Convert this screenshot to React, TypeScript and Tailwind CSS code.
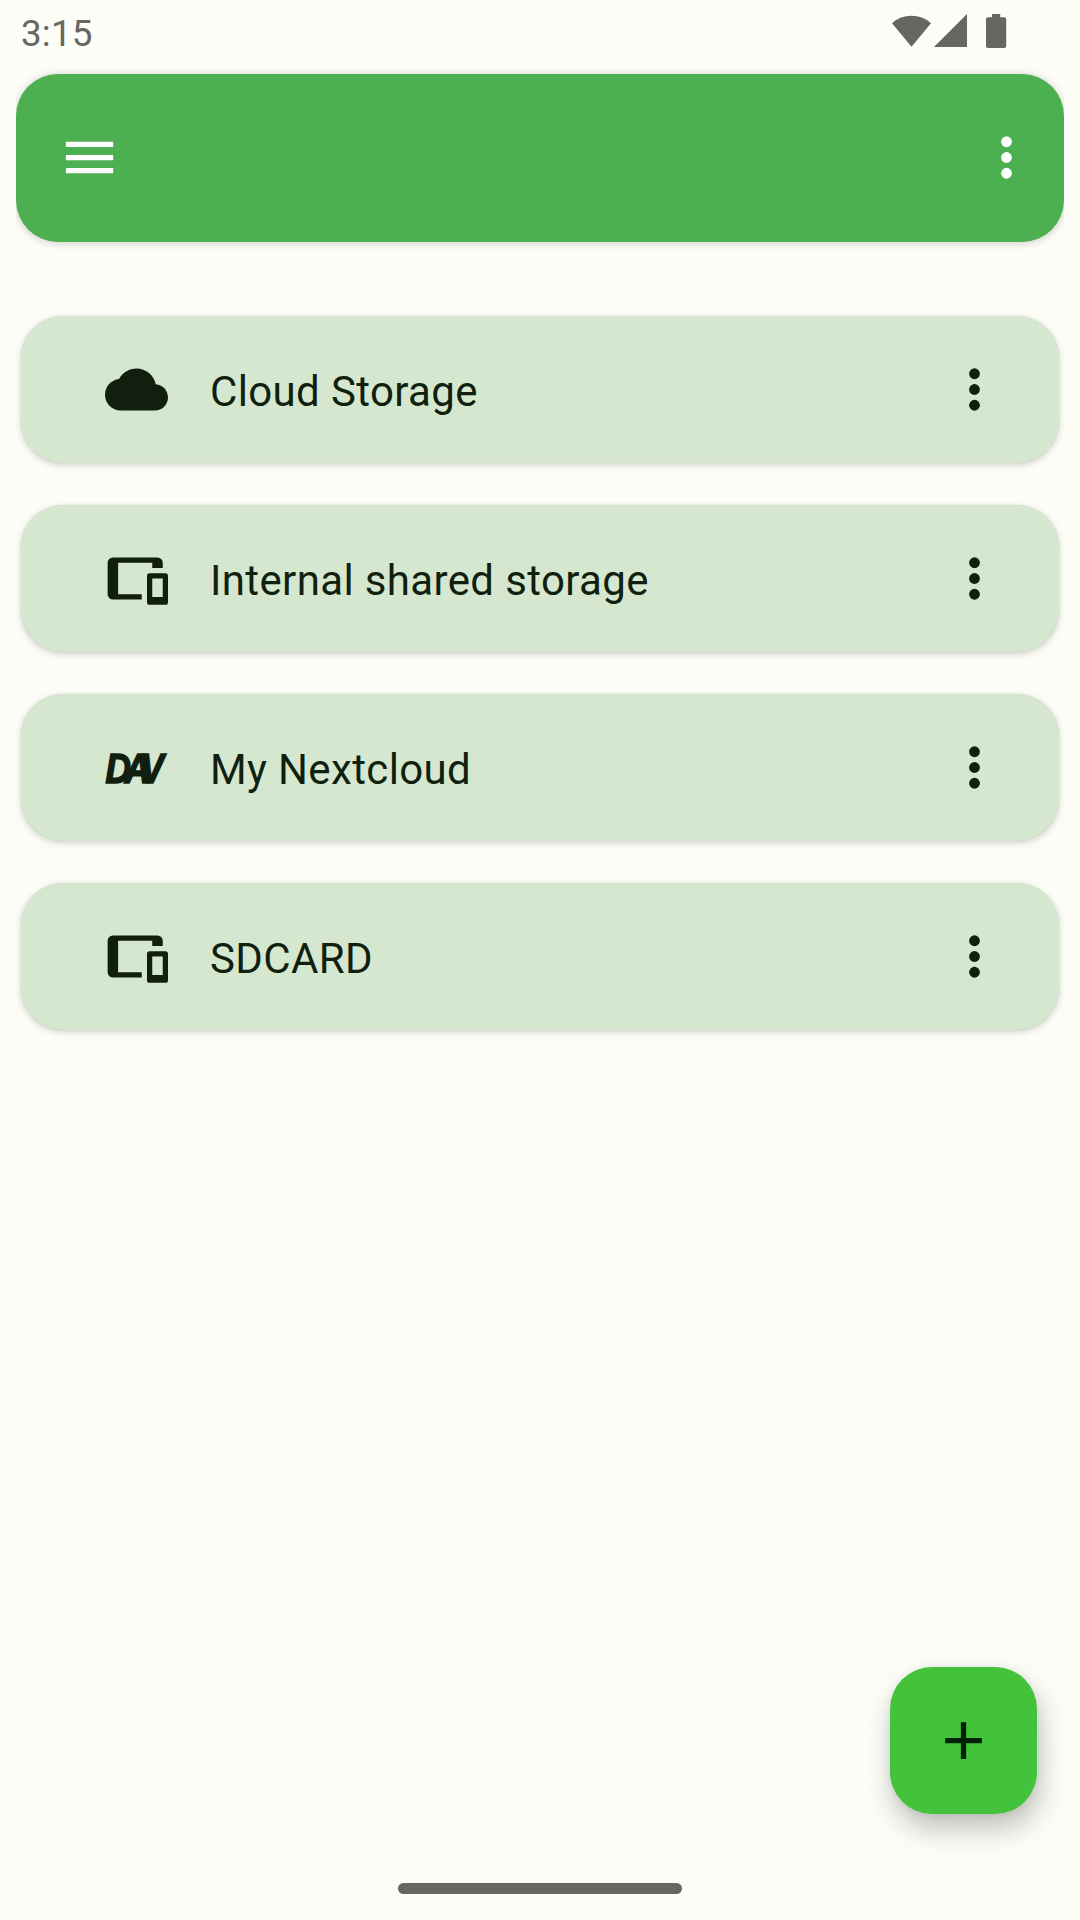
import React from "react";

function MoreIcon({ className }: { className: string }) {
  return (
    <svg viewBox="0 0 24 24" className={className} fill="currentColor">
      <circle cx="12" cy="6" r="2.05" />
      <circle cx="12" cy="12" r="2.05" />
      <circle cx="12" cy="18" r="2.05" />
    </svg>
  );
}

function CloudIcon() {
  return (
    <svg viewBox="0 0 24 24" className="size-[63px]" fill="currentColor">
      <path d="M19.35 10.04C18.67 6.59 15.64 4 12 4 9.11 4 6.6 5.64 5.35 8.04 2.34 8.36 0 10.91 0 14c0 3.31 2.69 6 6 6h13c2.76 0 5-2.24 5-5 0-2.64-2.05-4.78-4.65-4.96z" />
    </svg>
  );
}

function DevicesIcon() {
  return (
    <svg viewBox="0 0 24 24" className="size-[63px]" fill="currentColor">
      <path d="M3 4h17a2 2 0 0 1 2 2v2h-4V6H5v12h9v2H3a2 2 0 0 1-2-2V6a2 2 0 0 1 2-2z" />
      <path
        fillRule="evenodd"
        d="M17 10h6a1 1 0 0 1 1 1v10a1 1 0 0 1-1 1h-6a1 1 0 0 1-1-1V11a1 1 0 0 1 1-1zm1 2v7h4v-7z"
      />
    </svg>
  );
}

function DavIcon() {
  return (
    <svg
      viewBox="0 0 63 63"
      className="size-[63px] overflow-visible font-['Liberation_Sans',sans-serif] text-[43px] font-bold italic"
      fill="currentColor"
      stroke="currentColor"
      strokeWidth="1.7"
    >
      <text y="47" x="0.7 24 43" transform="scale(0.82 1)">
        DAV
      </text>
    </svg>
  );
}

const storages = [
  { name: "Cloud Storage", Icon: CloudIcon },
  { name: "Internal shared storage", Icon: DevicesIcon },
  { name: "My Nextcloud", Icon: DavIcon },
  { name: "SDCARD", Icon: DevicesIcon },
];

function StatusBar() {
  return (
    <div className="flex h-[63px] justify-between pl-[21px] text-[#666760]">
      <span className="pt-[12px] text-[36.75px] leading-[43px] tracking-[0.2px]">3:15</span>
      <svg viewBox="885 0 195 63" className="h-[63px] w-[195px]" fill="currentColor">
        <path d="M892 23.2A29 29 0 0 1 931 23.2L911.5 46.7z" />
        <path d="M967 14v33h-33z" />
        <path d="M992 14h8.2v3.3h4a2 2 0 0 1 2 2V46a2 2 0 0 1-2 2h-16.2a2 2 0 0 1-2-2V19.300a2 2 0 0 1 2-2h4z" />
      </svg>
    </div>
  );
}

export default function App() {
  return (
    <div className="relative flex h-[1920px] w-[1080px] flex-col bg-[#fcfdf6] font-[Roboto,sans-serif]">
      <StatusBar />
      <div className="mx-4 overflow-hidden pt-[11px] pb-[11px]">
        <header className="flex h-[168px] items-center justify-between rounded-[42px] bg-[#4caf50] pr-[26px] pb-px pl-[42px] text-white shadow-[0_1px_8px_rgba(0,0,0,0.2)]">
          <svg viewBox="0 0 24 24" className="size-[63px]" fill="currentColor">
            <path d="M3 18h18v-2H3v2zm0-5h18v-2H3v2zm0-7v2h18V6H3z" />
          </svg>
          <MoreIcon className="size-[63px]" />
        </header>
      </div>
      <main className="mx-[21px] mt-[63px] flex flex-col gap-[42px]">
        {storages.map(({ name, Icon }) => (
          <div
            key={name}
            className="flex h-[147px] items-center rounded-[42px] bg-[#d5e8cf] pr-[53.500px] pl-[84px] text-[#111f0f] shadow-[0_2px_7px_rgba(0,0,0,0.18),0_0_1px_rgba(0,0,0,0.15)]"
          >
            <Icon />
            <span className="ml-[42px] flex-1 pt-[3px] text-[42px] leading-[63px] tracking-[0.36px]">
              {name}
            </span>
            <MoreIcon className="size-[63px]" />
          </div>
        ))}
      </main>
      <button className="absolute top-[1667px] left-[890px] flex size-[147px] items-center justify-center rounded-[42px] bg-[#43c33c] text-[#002204] shadow-[3px_15px_28px_rgba(0,0,0,0.24),0_1px_8px_rgba(0,0,0,0.06)]">
        <svg viewBox="0 0 24 24" className="size-[63px]" fill="currentColor">
          <path d="M19 13h-6v6h-2v-6H5v-2h6V5h2v6h6v2z" />
        </svg>
      </button>
      <div className="mx-auto mt-auto mb-[26px] h-[11px] w-[284px] rounded-full bg-[#666760]" />
    </div>
  );
}
